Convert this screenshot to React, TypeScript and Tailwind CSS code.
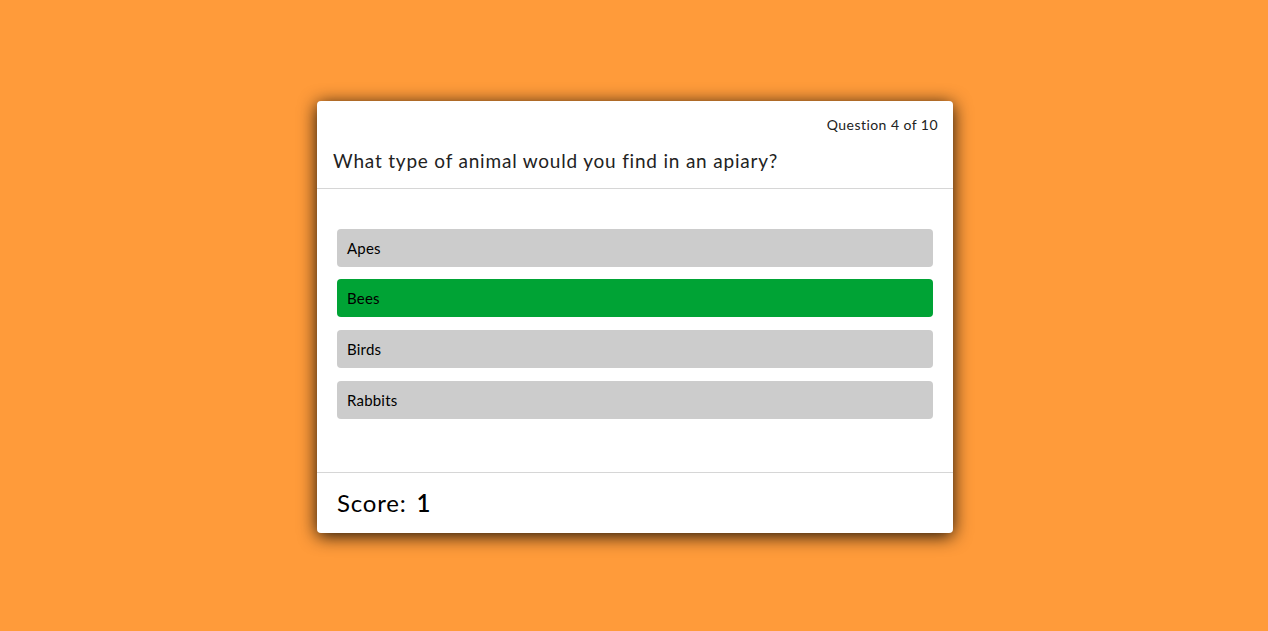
import React from "react";

const options = [
  { t: "Apes", mb: "mb-[12px]" },
  { t: "Bees", mb: "mb-[13px]" },
  { t: "Birds", mb: "mb-[13px]" },
  { t: "Rabbits", mb: "mb-[13px]" },
];

export default function App() {
  return (
    <div
      className="w-full h-[631px] bg-[#ff9b3a] flex justify-center pt-[101px] pl-[2px]"
      style={{ fontFamily: "Lato, 'Open Sans', sans-serif" }}
    >
      <div className="w-[636px] h-[432px] bg-white rounded-[4px] shadow-[0_3px_18px_rgba(0,0,0,0.9)] flex flex-col text-black">
        <div className="h-[88px] border-b border-[#d6d6d6] flex flex-col">
          <div className="text-[14px] text-right pr-[15px] pt-[15px] leading-[18px] text-[#222] tracking-[0.45px]">
            Question 4 of 10
          </div>
          <div className="text-[19px] pl-[16px] mt-[16px] leading-[22px] text-[#222] tracking-[0.8px]">
            What type of animal would you find in an apiary?
          </div>
        </div>
        <div className="h-[284px] px-[20px] pt-[40px] border-b border-[#d6d6d6] flex flex-col">
          {options.map((o) => (
            <div
              key={o.t}
              className={`h-[38px] ${o.mb} rounded-[4px] pl-[10px] flex items-center text-[15px] tracking-[0.2px] ${
                o.t === "Bees" ? "bg-[#00a335]" : "bg-[#cccccc]"
              }`}
            >
              {o.t}
            </div>
          ))}
        </div>
        <div className="flex-1 flex items-center pl-[20px] text-[24px] tracking-[0.8px]">
          Score: <span className="ml-[10px] font-semibold">1</span>
        </div>
      </div>
    </div>
  );
}
